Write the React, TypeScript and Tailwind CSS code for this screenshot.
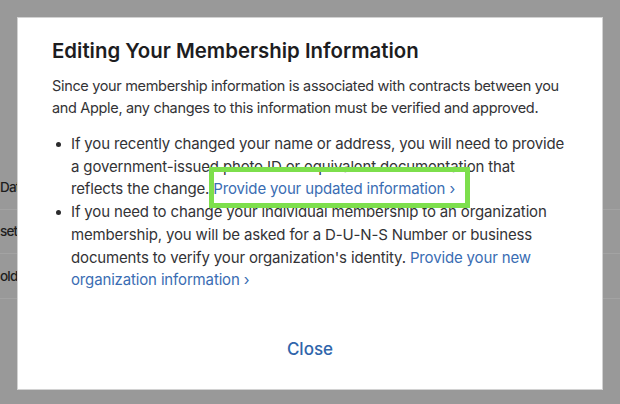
import React from 'react';

const font = { fontFamily: 'Inter, "Noto Sans", sans-serif' };

const backRows = ['Date', 'set', 'old'];

function Bullet({ children }: { children: React.ReactNode }) {
  return (
    <li className="flex">
      <span className="w-[19px] shrink-0 pt-[9px] pl-[4px]">
        <span className="block w-[5px] h-[5px] rounded-full bg-[#2b2b2d]" />
      </span>
      <span>{children}</span>
    </li>
  );
}

export default function App() {
  return (
    <div className="relative w-[620px] h-[404px] overflow-hidden bg-[#999999]" style={font}>
      {/* page behind the overlay */}
      <div className="pt-[165px] flex flex-col">
        {backRows.map((r) => (
          <div
            key={r}
            className="h-[44.5px] flex items-center border-b border-[#a3a3a3] text-[13.5px] font-medium tracking-[-0.8px] text-[#1e1e1e]"
          >
            {r}
          </div>
        ))}
      </div>

      {/* modal */}
      <div className="absolute left-[17px] top-[17px] w-[586px] h-[373px] bg-white border border-[#d2d2d2] px-[34px] pt-[19px] flex flex-col">
        <h1 className="text-[20.4px] leading-7 font-semibold text-[#1d1d1f]">
          Editing Your Membership Information
        </h1>
        <p className="mt-[10px] text-[14.5px] leading-[22px] tracking-[-0.33px] text-[#333336]">
          Since your membership information is associated with contracts between you and Apple, any
          changes to this information must be verified and approved.
        </p>
        <ul className="mt-[14px] text-[15px] leading-[22.7px] tracking-[-0.15px] text-[#333336]">
          <Bullet>
            If you recently changed your name or address, you will need to provide a
            government-issued photo ID or equivalent documentation that reflects the change.{' '}
            <a className="text-[#3a6db3]">Provide your updated information ›</a>
          </Bullet>
          <Bullet>
            If you need to change your individual membership to an organization membership, you will
            be asked for a D-U-N-S Number or business documents to verify your organization's
            identity. <a className="text-[#3a6db3]">Provide your new organization information ›</a>
          </Bullet>
        </ul>
        <div className="mt-auto pb-[28px] flex justify-center">
          <button className="text-[17px] leading-6 font-medium text-[#2f65ab]">Close</button>
        </div>
      </div>

      {/* highlight annotation */}
      <div className="absolute left-[209px] top-[167px] w-[261px] h-[41px] border-[5px] border-[#7ddf4c]" />
    </div>
  );
}
